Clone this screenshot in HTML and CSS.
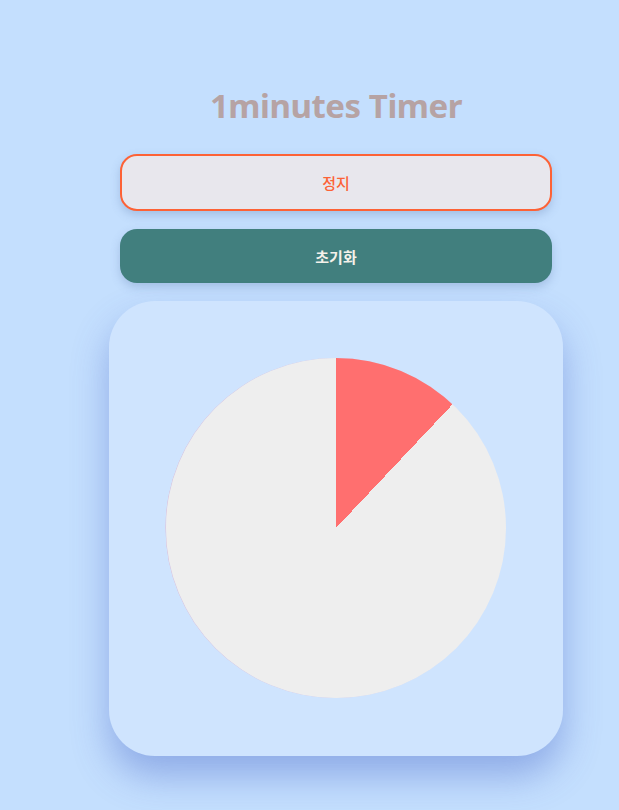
FILE: index.html
```html
<!DOCTYPE html>
<html lang="ko">
<head>
<meta charset="utf-8">
<link rel="stylesheet" href="styles.css">
</head>
<body>
<main class="app">
  <h1 class="title">1minutes Timer</h1>
  <div class="controls">
    <button class="btn btn-stop">정지</button>
    <button class="btn btn-reset">초기화</button>
  </div>
  <section class="card">
    <div class="pie"></div>
  </section>
</main>
</body>
</html>
```
FILE: styles.css
```css
html, body {
  margin: 0;
  padding: 0;
}
body {
  background: #c4dffe;
  font-family: "Noto Sans", "Noto Sans CJK KR", sans-serif;
  width: 619px;
  height: 810px;
  overflow: hidden;
}
.app {
  width: 454px;
  margin-left: 109px;
  padding-top: 83px;
  display: flex;
  flex-direction: column;
  align-items: center;
}
.title {
  margin: 0;
  font-size: 33px;
  line-height: 46px;
  font-weight: 700;
  color: #b6a3a4;
  letter-spacing: -0.45px;
}
.controls {
  margin-top: 25px;
  width: 432px;
  display: flex;
  flex-direction: column;
  gap: 18px;
}
.btn {
  font-family: "Noto Sans CJK KR", "Noto Sans", sans-serif;
  font-size: 15px;
  font-weight: 700;
  border-radius: 17px;
  width: 100%;
  cursor: pointer;
}
.btn-stop {
  height: 57px;
  background: #e8e7ed;
  border: 2px solid #fd6236;
  color: #fd6236;
  font-weight: 500;
  box-shadow: 0 4px 10px rgba(90, 120, 170, 0.3);
}
.btn-reset {
  height: 54px;
  background: #417f7e;
  border: none;
  color: #f4f1ea;
  box-shadow: 0 4px 10px rgba(90, 120, 170, 0.3);
}
.card {
  margin-top: 18px;
  width: 454px;
  box-sizing: border-box;
  padding: 57px 57px 58px;
  background: #cfe4fe;
  border-radius: 46px;
  box-shadow: 0 20px 36px rgba(70, 100, 200, 0.42);
}
.pie {
  width: 340px;
  height: 340px;
  border-radius: 50%;
  background: conic-gradient(#ff6f6f 0 43.3deg, #eeeeee 43.3deg 360deg);
  box-shadow: -0.5px 0 0 rgba(255, 120, 140, 0.4);
}
```
